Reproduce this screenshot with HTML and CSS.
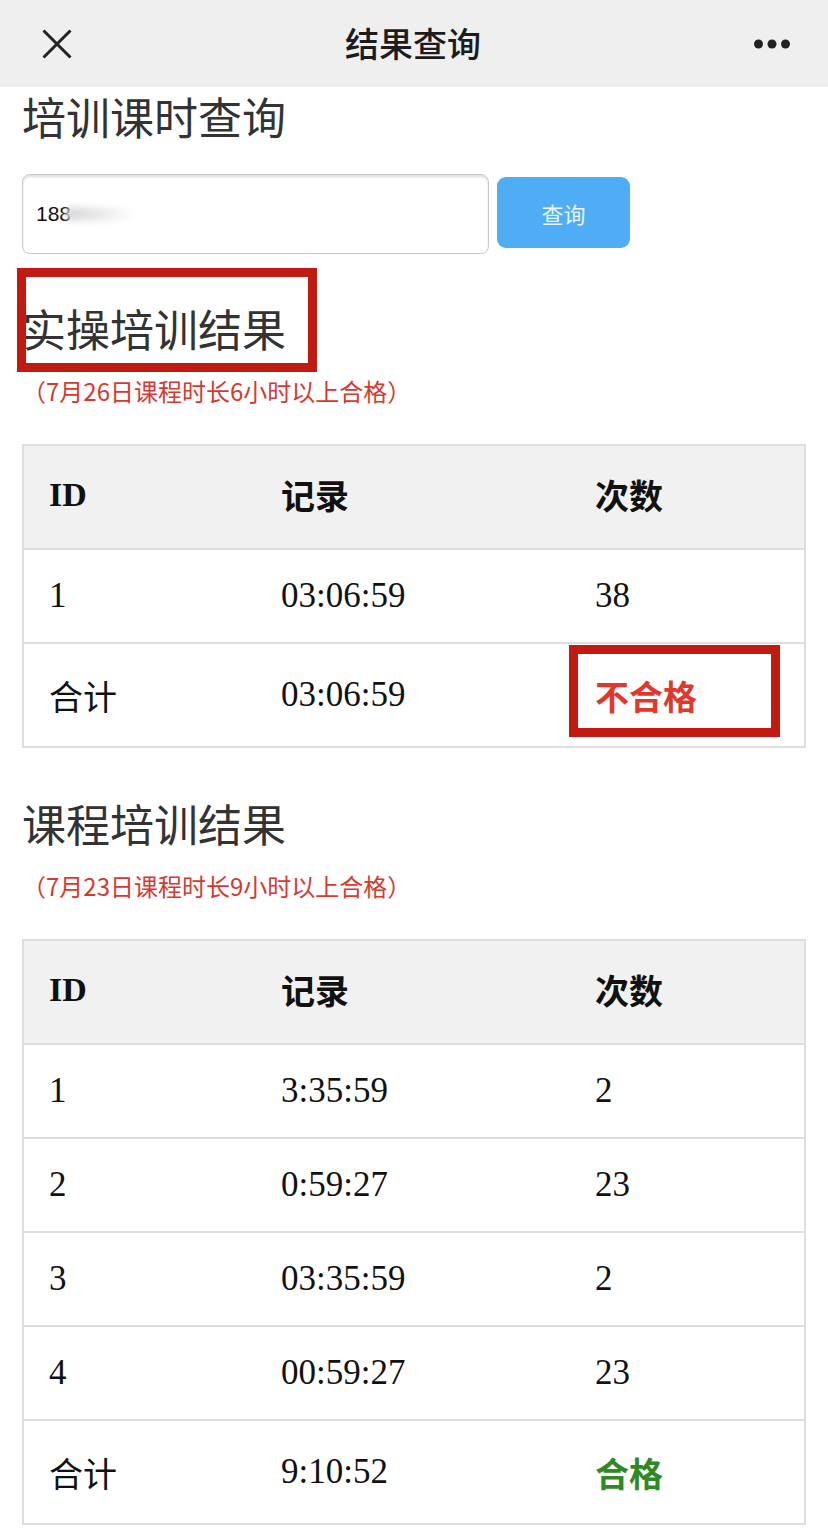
FILE: index.html
```html
<!DOCTYPE html>
<html lang="zh-CN">
<head>
    <meta charset="UTF-8">
    <meta name="viewport" content="width=device-width, initial-scale=1.0">
    <title>结果查询</title>
    <link rel="stylesheet" href="styles.css">
</head>
<body>
    <div class="navbar">
        <div class="nav-left">
            <svg width="30" height="30" viewBox="0 0 30 30">
                <path d="M1.5 1.5 L28.5 28.5 M28.5 1.5 L1.5 28.5" stroke="#222" stroke-width="3" fill="none"/>
            </svg>
        </div>
        <div class="nav-title">结果查询</div>
        <div class="nav-right">
            <svg width="36" height="10" viewBox="0 0 36 10">
                <circle cx="4.5" cy="5" r="4.5" fill="#222"/>
                <circle cx="18" cy="5" r="4.5" fill="#222"/>
                <circle cx="31.5" cy="5" r="4.5" fill="#222"/>
            </svg>
        </div>
    </div>

    <div id="content">
        <h1 class="page-title">培训课时查询</h1>

        <div class="search-row">
            <div class="search-input">188<span class="blur-mask"></span></div>
            <button class="search-button">查询</button>
        </div>

        <div class="section-head">
            <h2 class="section-title">实操培训结果</h2>
            <span class="mark-box title-mark"></span>
        </div>
        <p class="section-note">（7月26日课程时长6小时以上合格）</p>

        <table class="result-table">
            <colgroup>
                <col class="col-id">
                <col class="col-time">
                <col>
            </colgroup>
            <tr class="head-row">
                <th class="cell-id">ID</th>
                <th>记录</th>
                <th>次数</th>
            </tr>
            <tr>
                <td>1</td>
                <td>03:06:59</td>
                <td>38</td>
            </tr>
            <tr class="total-row">
                <td class="cjk">合计</td>
                <td>03:06:59</td>
                <td class="result-cell fail">不合格<span class="mark-box cell-mark"></span></td>
            </tr>
        </table>

        <div class="section-head second">
            <h2 class="section-title">课程培训结果</h2>
        </div>
        <p class="section-note">（7月23日课程时长9小时以上合格）</p>

        <table class="result-table">
            <colgroup>
                <col class="col-id">
                <col class="col-time">
                <col>
            </colgroup>
            <tr class="head-row">
                <th class="cell-id">ID</th>
                <th>记录</th>
                <th>次数</th>
            </tr>
            <tr>
                <td>1</td>
                <td>3:35:59</td>
                <td>2</td>
            </tr>
            <tr>
                <td>2</td>
                <td>0:59:27</td>
                <td>23</td>
            </tr>
            <tr>
                <td>3</td>
                <td>03:35:59</td>
                <td>2</td>
            </tr>
            <tr>
                <td>4</td>
                <td>00:59:27</td>
                <td>23</td>
            </tr>
            <tr class="total-row">
                <td class="cjk">合计</td>
                <td>9:10:52</td>
                <td class="result-cell pass">合格</td>
            </tr>
        </table>
    </div>
</body>
</html>
```

FILE: styles.css
```css
body {
    margin: 0;
    background: #fff;
    font-family: "Noto Sans CJK SC", "Noto Sans", sans-serif;
    color: #333;
}
.navbar {
    height: 87px;
    background: #efefef;
    display: grid;
    grid-template-columns: 1fr auto 1fr;
    align-items: center;
    padding: 0 38px 0 42px;
}
.nav-left svg,
.nav-right svg {
    display: block;
}
.nav-right {
    justify-self: end;
}
.nav-title {
    font-size: 34px;
    font-weight: 500;
    color: #1c1c1c;
    margin: -2px 0 0 -6px;
}
#content {
    padding: 0 22px;
}
.page-title,
.section-title {
    margin: 0;
    font-size: 44px;
    line-height: 52px;
    font-weight: 400;
    color: #333;
}
.page-title {
    margin-top: 3px;
}
.search-row {
    margin-top: 32px;
    display: flex;
    align-items: center;
    gap: 8px;
}
.search-input {
    box-sizing: border-box;
    width: 467px;
    height: 80px;
    border: 1px solid #c9c9c9;
    border-radius: 8px;
    box-shadow: inset 0 2px 2px rgba(0, 0, 0, 0.12);
    padding-left: 13px;
    display: flex;
    align-items: center;
    font-family: "Liberation Sans", Arial, sans-serif;
    font-size: 21px;
    color: #111;
}
.blur-mask {
    display: inline-block;
    width: 70px;
    height: 14px;
    margin-left: -6px;
    background: linear-gradient(90deg, #d6d6d6, #eee 60%, #fff);
    filter: blur(3px);
    border-radius: 8px;
}
.search-button {
    width: 133px;
    height: 71px;
    border: none;
    border-radius: 9px;
    background: #4fadf6;
    color: #eaf5ff;
    font-family: "Noto Sans CJK SC", sans-serif;
    font-size: 22px;
    margin-top: -3px;
}
.section-head {
    position: relative;
    margin-top: 48px;
}
.section-head.second {
    margin-top: 49px;
}
.mark-box {
    position: absolute;
    box-sizing: border-box;
    border: 9px solid #c11a10;
}
.title-mark {
    left: -5px;
    top: -34px;
    width: 300px;
    height: 104px;
}
.section-note {
    margin: 22px 0 0;
    font-size: 24px;
    line-height: 30px;
    color: #d6392f;
}
.result-table {
    margin-top: 38px;
    width: 784px;
    border-collapse: collapse;
    table-layout: fixed;
    border: 2px solid #dedede;
    font-family: "Liberation Serif", "Noto Sans CJK SC", serif;
    font-size: 35px;
    color: #111;
}
.col-id {
    width: 233px;
}
.col-time {
    width: 314px;
}
.result-table th,
.result-table td {
    border-top: 2px solid #dedede;
    border-bottom: 2px solid #dedede;
    padding: 0 0 0 25px;
    text-align: left;
    height: 92px;
}
.head-row th {
    background: #f1f1f1;
    height: 97px;
    padding-bottom: 5px;
    font-family: "Noto Sans CJK SC", sans-serif;
    font-weight: 700;
    font-size: 34px;
}
.head-row th.cell-id {
    font-family: "Liberation Serif", serif;
}
.total-row td {
    height: 102px;
}
.cjk {
    font-family: "Noto Sans CJK SC", sans-serif;
    font-size: 34px;
}
.result-cell {
    position: relative;
    font-family: "Noto Sans CJK SC", sans-serif;
    font-size: 34px;
    font-weight: 700;
}
.fail {
    color: #e0392c;
}
.pass {
    color: #2f8a26;
}
.cell-mark {
    left: -1px;
    top: 1px;
    width: 211px;
    height: 92px;
}
```
